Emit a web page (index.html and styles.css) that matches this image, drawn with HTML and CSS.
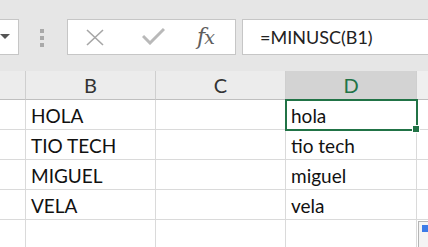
FILE: index.html
```html
<!DOCTYPE html>
<html lang="es">
<head>
<meta charset="UTF-8">
<title>MINUSC</title>
<link rel="stylesheet" href="styles.css">
</head>
<body>
    <div class="toolbar">
        <div class="name-box">
            <svg width="10" height="6" viewBox="0 0 10 6"><path d="M0 0 L10 0 L5 5 Z" fill="#555"/></svg>
        </div>
        <div class="grip">
            <span></span><span></span><span></span>
        </div>
        <div class="fx-buttons">
            <svg class="btn-x" width="20" height="17" viewBox="0 0 20 17"><path d="M2 1 L18 16 M18 1 L2 16" stroke="#a6a6a6" stroke-width="1.6" fill="none"/></svg>
            <svg class="btn-ok" width="23" height="18" viewBox="0 0 23 18"><path d="M1 9 L8 16 L22 2" stroke="#b9b9b9" stroke-width="3" fill="none"/></svg>
            <span class="fx">f<i>x</i></span>
        </div>
        <div class="formula">=MINUSC(B1)</div>
    </div>

    <div class="sheet">
        <div class="cell head first"></div>
        <div class="cell head">B</div>
        <div class="cell head">C</div>
        <div class="cell head selected">D</div>
        <div class="cell head last"></div>

        <div class="cell first"></div>
        <div class="cell">HOLA</div>
        <div class="cell"></div>
        <div class="cell active">hola<span class="handle"></span></div>
        <div class="cell last"></div>

        <div class="cell first"></div>
        <div class="cell">TIO TECH</div>
        <div class="cell"></div>
        <div class="cell">tio tech</div>
        <div class="cell last"></div>

        <div class="cell first"></div>
        <div class="cell">MIGUEL</div>
        <div class="cell"></div>
        <div class="cell">miguel</div>
        <div class="cell last"></div>

        <div class="cell first"></div>
        <div class="cell">VELA</div>
        <div class="cell"></div>
        <div class="cell">vela</div>
        <div class="cell last"></div>

        <div class="cell first"></div>
        <div class="cell"></div>
        <div class="cell"></div>
        <div class="cell"></div>
        <div class="cell last"><span class="paste"></span></div>
    </div>
</body>
</html>
```

FILE: styles.css
```css
body {
    margin: 0;
    width: 428px;
    height: 247px;
    overflow: hidden;
    background: #fff;
    font-family: Lato, "Open Sans", sans-serif;
}

.toolbar {
    display: flex;
    align-items: flex-start;
    height: 71px;
    padding-top: 19px;
    box-sizing: border-box;
    background: #e6e6e6;
}
.name-box {
    width: 19px;
    height: 36px;
    box-sizing: border-box;
    background: #fff;
    border: 1px solid #c6c6c6;
    border-left: none;
    display: flex;
    align-items: center;
}
.grip {
    width: 6px;
    margin-left: 21px;
    margin-top: 10px;
    display: flex;
    flex-direction: column;
    gap: 3px;
}
.grip span {
    display: block;
    width: 4px;
    height: 4px;
    background: #a9a9a9;
}
.fx-buttons {
    margin-left: 21px;
    width: 169px;
    height: 36px;
    box-sizing: border-box;
    background: #fff;
    border: 1px solid #c6c6c6;
    display: flex;
    align-items: center;
}
.btn-x {
    margin-left: 17px;
}
.btn-ok {
    margin-left: 37px;
    margin-top: -2px;
}
.fx {
    margin-left: 32px;
    font-family: "DejaVu Serif", serif;
    font-style: italic;
    font-size: 22px;
    color: #5e5e5e;
    letter-spacing: -1px;
    line-height: 1;
}
.fx i {
    font-size: 19px;
}
.formula {
    margin-left: 6px;
    flex: 1;
    height: 36px;
    box-sizing: border-box;
    background: #fff;
    border: 1px solid #c6c6c6;
    border-right: none;
    padding-left: 17px;
    font-size: 18px;
    line-height: 34px;
    color: #222;
}

.sheet {
    display: grid;
    grid-template-columns: 26px 130px 130px 131px 11px;
    grid-template-rows: 29px repeat(5, 30px);
}
.cell {
    border-right: 1px solid #dadada;
    border-bottom: 1px solid #dadada;
    box-sizing: border-box;
    font-size: 19px;
    line-height: 31px;
    padding-left: 5px;
    color: #111;
    position: relative;
}
.cell.first,
.cell.last {
    padding-left: 0;
}
.cell.last {
    border-right: none;
}
.cell.head {
    background: #ececec;
    border-right-color: #cfcfcf;
    border-bottom-color: #bfbfbf;
    text-align: center;
    padding-left: 0;
    line-height: 29px;
    font-size: 20px;
    color: #333;
}
.cell.head.selected {
    background: #d3d3d3;
    color: #217346;
    border-bottom: 1px solid #9c9c9c;
}
.cell.head.last {
    background: #efefef;
}
.cell.active {
    outline: 2px solid #217346;
    outline-offset: -1px;
    z-index: 1;
}
.handle {
    position: absolute;
    right: -4px;
    bottom: -4px;
    width: 6px;
    height: 6px;
    background: #217346;
    border: 1px solid #fff;
}
.paste {
    position: absolute;
    left: 1px;
    top: 1px;
    width: 14px;
    height: 30px;
    border: 1px solid #b5b5b5;
    background: #f4f4f4;
}
.paste::before {
    content: "";
    position: absolute;
    left: 3px;
    top: 3px;
    width: 10px;
    height: 7px;
    background: #3c7be8;
}
```
